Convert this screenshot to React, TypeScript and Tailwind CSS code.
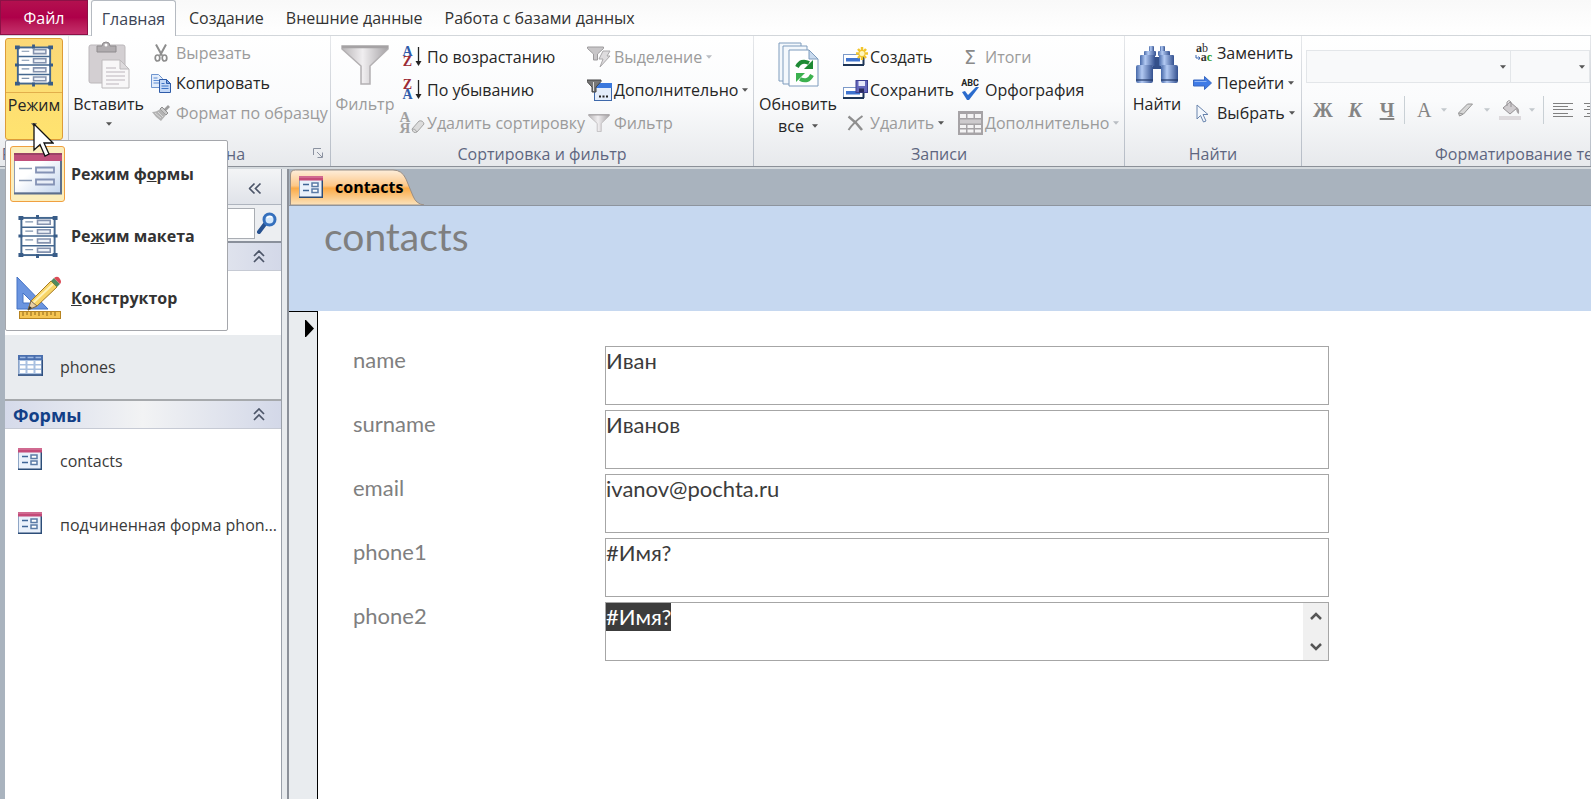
import { useEffect, useRef, type ReactNode } from "react"

function LayoutIcon({ className }: { className: string }) {
    return (
        <svg className={className} viewBox="0 0 40 44" fill="none">
            <rect x="3" y="3" width="34" height="38" fill="#fff" stroke="#44678f" strokeWidth="2" />
            <path d="M3 12.500h34M3 21.500h34M3 31.500h34" stroke="#44678f" strokeWidth="1.600" />
            <path d="M7 7h8M7 16.500h8M7 25.500h8M7 35.500h8" stroke="#7f93ad" strokeWidth="1.200" />
            <path d="M19.500 5.500h13v4h-13zM19.500 15h13v4h-13zM19.500 24.500h13v4h-13zM19.500 34h13v4h-13z" fill="#eef2f8" stroke="#8492ae" strokeWidth="1.600" />
            <path d="M0 1h5v4H0zM35 1h5v4h-5zM0 39h5v4H0zM35 39h5v4h-5zM18 0h3v4h-3zM18 40h3v4h-3zM0 20h4v3H0zM36 20h4v3h-4z" fill="#385c88" />
        </svg>
    )
}

function FormIcon({ className }: { className: string }) {
    return (
        <svg className={className} viewBox="0 0 24 22" fill="none">
            <rect x="0.500" y="0.500" width="23" height="21" fill="#eaf1fb" stroke="#8fa6c6" />
            <path d="M0 21.200h24M23.300 4v18" stroke="#2c4d78" strokeWidth="1.500" />
            <rect width="24" height="4.500" fill="#c44a78" />
            <path d="M0 1h24" stroke="#dc8aa9" />
            <path d="M4 8.500h6M4 14.500h6" stroke="#3f6596" strokeWidth="1.400" />
            <path d="M13 7h6v3.500h-6zM13 13h6v3.500h-6z" fill="#fff" stroke="#5b7ba6" strokeWidth="1.500" />
        </svg>
    )
}

function BigFormIcon() {
    return (
        <svg className="h-[42px] w-[48px]" viewBox="0 0 48 42" fill="none">
            <defs>
                <linearGradient id="formPage" x1="0" y1="0" x2="1" y2="1">
                    <stop offset="0.400" stopColor="#fff" />
                    <stop offset="1" stopColor="#c3d5ee" />
                </linearGradient>
            </defs>
            <rect x="0.500" y="1" width="46" height="39" fill="url(#formPage)" stroke="#8e9db5" />
            <path d="M0 40.500h48M47 8v33" stroke="#5c6f8d" strokeWidth="2" />
            <rect y="0" width="48" height="8" fill="#c04f7b" />
            <path d="M0 1h48" stroke="#8f3d5f" strokeWidth="1.500" />
            <path d="M5 15.500h13M5 27.500h13" stroke="#8a9ab5" strokeWidth="1.500" />
            <path d="M22 14.500h18v5H22zM22 26.500h18v5H22z" fill="#e9eef7" stroke="#8492b5" strokeWidth="1.800" />
        </svg>
    )
}

function DesignIcon() {
    return (
        <svg className="h-[44px] w-[46px]" viewBox="0 0 46 44" fill="none">
            <path d="M2 1v32h31z" fill="#6b95e0" stroke="#4472c4" />
            <path d="M8 17v10h10z" fill="#fff" stroke="#4472c4" />
            <rect x="4.500" y="35.500" width="41" height="7" fill="#f5c451" stroke="#b78421" />
            <path d="M8 36v4M12 36v3M16 36v4M20 36v3M24 36v4M28 36v3M32 36v4M36 36v3M40 36v4" stroke="#8d6518" />
            <path d="M13 34l3-9L36 5l6 6-20 19z" fill="#f8d568" stroke="#a57a24" />
            <path d="M18 27L38 8" stroke="#fff2b8" strokeWidth="2" />
            <path d="M36 5l3-3 6 6-3 3z" fill="#4f8a5f" />
            <path d="M39 2q4-3 6 1 2 3 0 5z" fill="#db4a55" />
            <path d="M13 34l3-9 6 5z" fill="#e9cfa3" stroke="#7b6b52" />
            <path d="M13 34l1.500-4 2.500 2z" fill="#333" />
        </svg>
    )
}

function TableIcon() {
    return (
        <svg className="h-[21px] w-[25px]" viewBox="0 0 25 21" fill="none">
            <rect x="0.500" y="0.500" width="24" height="20" fill="#a9c0e0" stroke="#8aa3c7" />
            <rect width="25" height="5" fill="#4a6fae" />
            <path d="M2 6h5.500v3H2zM9.500 6h6v3h-6zM17.500 6h5.500v3h-5.500zM2 10.500h5.500v3H2zM9.500 10.500h6v3h-6zM17.500 10.500h5.500v3h-5.500zM2 15h5.500v3H2zM9.500 15h6v3h-6zM17.500 15h5.500v3h-5.500z" fill="#fff" />
            <path d="M2 2.500h5.500M9.500 2.500h6M17.500 2.500h5.500" stroke="#9db8e2" strokeWidth="1.500" />
            <path d="M0 20h25M24.300 5v16" stroke="#2f4f7f" strokeWidth="1.500" />
        </svg>
    )
}

function PasteIcon() {
    return (
        <svg className="h-[48px] w-[42px]" viewBox="0 0 42 48" fill="none">
            <rect x="1" y="4" width="36" height="38" rx="2" fill="#d3cfd2" stroke="#bcb8bb" />
            <path d="M9 5h5q0-4 4-4t4 4h6v6H9z" fill="#b0acaf" stroke="#8f8c8e" />
            <circle cx="18" cy="4" r="1.500" fill="#fff" />
            <path d="M14 19h18l9 9v19H14z" fill="#f8f7f8" stroke="#bdbabc" />
            <path d="M32 19v9h9z" fill="#dedbdd" stroke="#bdbabc" />
            <path d="M18 27h10M18 31h19M18 35h19M18 39h19M18 43h13" stroke="#cfcccf" strokeWidth="1.500" />
        </svg>
    )
}

function CutIcon() {
    return (
        <svg className="h-[18px] w-[14px]" viewBox="0 0 14 18" fill="none" stroke="#8d8d8d">
            <path d="M2 0.500l6 11M12 0.500l-6 11" strokeWidth="2" />
            <ellipse cx="3.500" cy="14" rx="2.300" ry="3" strokeWidth="1.700" />
            <ellipse cx="10.500" cy="14" rx="2.300" ry="3" strokeWidth="1.700" />
        </svg>
    )
}

function CopyIcon() {
    return (
        <svg className="h-[19px] w-[20px]" viewBox="0 0 20 19" fill="none">
            <path d="M0.500 0.500h7l4 4v9h-11z" fill="#e3edfb" stroke="#6f95cf" />
            <path d="M2.500 4h4M2.500 6.500h6M2.500 9h6" stroke="#5f8dd3" />
            <path d="M8.500 5.500h7l4 4v9h-11z" fill="#c3d8f7" stroke="#2f5ca8" />
            <path d="M15.500 5.500v4h4z" fill="#7ea5e0" stroke="#2f5ca8" />
            <path d="M10.500 9.500h3M10.500 12h7M10.500 14.500h7" stroke="#3f74c6" />
        </svg>
    )
}

function BrushIcon() {
    return (
        <svg className="h-[16px] w-[18px]" viewBox="0 0 18 16" fill="none">
            <path d="M12 4l4-4 2 2-4 4z" fill="#9c9c9c" />
            <path d="M10 2l6 6-2 2-6-6z" fill="#c9c9c9" stroke="#8f8f8f" />
            <path d="M8 4l6 6-5 6q-5-3-9-9 5 0 8-3z" fill="#b3b3b3" />
            <path d="M3 8l6 5M6 7l5 5" stroke="#d8d8d8" />
        </svg>
    )
}

function FunnelIcon({ className }: { className: string }) {
    return (
        <svg className={className} viewBox="0 0 48 40" fill="none">
            <defs>
                <linearGradient id="funnel">
                    <stop offset="0" stopColor="#b9b6b8" />
                    <stop offset="0.450" stopColor="#f0eef0" />
                    <stop offset="1" stopColor="#a6a3a6" />
                </linearGradient>
            </defs>
            <path d="M1 1h46v3L29 21v18h-9V21L1 4z" fill="url(#funnel)" stroke="#b3b0b2" strokeWidth="1.500" />
            <path d="M1 2h46" stroke="#a5a2a4" strokeWidth="2.500" />
        </svg>
    )
}

function SortIcon({ top, bottom, topClass, bottomClass }: { top: string; bottom: string; topClass: string; bottomClass: string }) {
    return (
        <span className="flex items-center gap-0.5">
            <span className="flex w-[10px] flex-col items-center font-['Liberation_Serif',serif] text-[14px] font-bold leading-[10px]">
                <span className={topClass}>{top}</span>
                <span className={bottomClass}>{bottom}</span>
            </span>
            <svg className="h-[20px] w-[7px]" viewBox="0 0 7 20">
                <path d="M3.500 0v15" stroke="#222" strokeWidth="1.300" />
                <path d="M0.500 14h6l-3 5z" fill="#222" />
            </svg>
        </span>
    )
}

function ClearSortIcon() {
    return (
        <span className="flex items-end">
            <span className="flex w-[12px] flex-col items-center font-['Liberation_Serif',serif] text-[15px] font-bold leading-[11px] text-[#a0a0a0]">
                <span>А</span>
                <span>Я</span>
            </span>
            <svg className="h-[14px] w-[14px]" viewBox="0 0 14 14">
                <path d="M1 9l7-8q4-1 5 3l-7 8q-4 2-5-3z" fill="#dcdcdc" stroke="#a5a5a5" />
                <path d="M1 9q3-1 5 3" stroke="#a5a5a5" fill="none" />
            </svg>
        </span>
    )
}

function SelectionFilterIcon() {
    return (
        <svg className="h-[22px] w-[24px]" viewBox="0 0 24 22" fill="none">
            <path d="M0.500 1h16v1.500L10.500 8v6h-4V8L0.500 2.500z" fill="#c8c6c8" stroke="#9d9b9d" />
            <path d="M16 5h7l-3 5h3l-10 11 3-8h-4z" fill="#dedcde" stroke="#aaa8aa" />
        </svg>
    )
}

function AdvancedFilterIcon() {
    return (
        <svg className="h-[22px] w-[25px]" viewBox="0 0 25 22" fill="none">
            <rect x="7.500" y="4.500" width="17" height="17" fill="#e4edfb" stroke="#3d68ab" />
            <rect x="8" y="4" width="17" height="5" fill="#3a78dd" />
            <path d="M12 17.500h2M15.500 17.500h2M19 17.500h2" stroke="#222" strokeWidth="2" />
            <path d="M0 1h14v1.500L9 8v5H5V8L0 2.500z" fill="#777" stroke="#444" />
            <path d="M6.500 3v9" stroke="#ddd" />
        </svg>
    )
}

function RefreshIcon() {
    return (
        <svg className="h-[46px] w-[41px]" viewBox="0 0 41 46" fill="none">
            <path d="M1 1h22v38H1z" fill="#f4f8fc" stroke="#7f9cbd" />
            <path d="M5 4h24v38H5z" fill="#f4f8fc" stroke="#7f9cbd" />
            <path d="M11 8h20l9 9v27H11z" fill="#fff" stroke="#7f9cbd" />
            <path d="M31 8v9h9z" fill="#c9daee" stroke="#7f9cbd" />
            <path d="M19 25q4-8 12-4" stroke="#1e8a34" strokeWidth="4" />
            <path d="M35 18v9h-9z" fill="#1e8a34" />
            <path d="M34 33q-4 8-12 4" stroke="#3cb14f" strokeWidth="4" />
            <path d="M18 40v-9h9z" fill="#3cb14f" />
        </svg>
    )
}

function NewRecordIcon() {
    return (
        <svg className="h-[19px] w-[25px]" viewBox="0 0 25 19" fill="none">
            <rect x="0.500" y="7.500" width="20" height="10" fill="#fff" stroke="#7c9ac9" />
            <path d="M0 18h21M20.500 8v10" stroke="#1d3557" strokeWidth="2" />
            <rect x="3" y="11" width="14" height="3.500" fill="#3f74d0" />
            <path d="M19 0v13M13 6.500h12M15 2l8 9M23 2l-8 9" stroke="#f2c52c" strokeWidth="2.500" />
            <circle cx="19" cy="6.500" r="2.500" fill="#fff6bd" />
        </svg>
    )
}

function SaveRecordIcon() {
    return (
        <svg className="h-[19px] w-[25px]" viewBox="0 0 25 19" fill="none">
            <rect x="0.500" y="7.500" width="20" height="10" fill="#fff" stroke="#7c9ac9" />
            <path d="M0 18h21M20.500 8v10" stroke="#1d3557" strokeWidth="2" />
            <rect x="3" y="11" width="14" height="3.500" fill="#3f74d0" />
            <rect x="13" y="0.500" width="11.500" height="12" fill="#6467bb" stroke="#3c3f91" />
            <rect x="15.500" y="1" width="6.500" height="5" fill="#e6e8fa" />
            <rect x="16" y="8.500" width="5" height="4" fill="#2a2c60" />
        </svg>
    )
}

function DeleteIcon() {
    return (
        <svg className="h-[16px] w-[17px]" viewBox="0 0 17 16" fill="none">
            <path d="M1.500 1.500Q9 7 15 15" stroke="#8f8f8f" strokeWidth="2.500" />
            <path d="M15.500 1Q7 7 1.500 15" stroke="#8f8f8f" strokeWidth="2" />
        </svg>
    )
}

function SpellingIcon() {
    return (
        <span className="flex flex-col items-center">
            <span className="font-[Roboto,sans-serif] text-[9px] font-bold leading-[8px] text-[#222]">ABC</span>
            <svg className="h-[13px] w-[18px]" viewBox="0 0 18 13">
                <path d="M1 5l3-1 3 4L15 0h3L8 13H6z" fill="#2b6ccd" />
            </svg>
        </span>
    )
}

function MoreRecordsIcon() {
    return (
        <svg className="h-[24px] w-[25px]" viewBox="0 0 25 24">
            <rect width="25" height="24" fill="#a6a3a6" />
            <path d="M2 3h6v4H2zM9.500 3h6v4h-6zM17 3h6v4h-6zM2 14h6v3H2zM9.500 14h6v3h-6zM17 14h6v3h-6zM2 18.500h6v3H2zM9.500 18.500h6v3h-6zM17 18.500h6v3h-6z" fill="#f4f3f4" />
            <path d="M2 8.500h21v4H2z" fill="#cdcacd" />
        </svg>
    )
}

function BinocularsIcon() {
    return (
        <svg className="h-[40px] w-[44px]" viewBox="0 0 44 40" fill="none">
            <defs>
                <linearGradient id="tube">
                    <stop offset="0" stopColor="#4668a8" />
                    <stop offset="0.350" stopColor="#b3caf3" />
                    <stop offset="1" stopColor="#345190" />
                </linearGradient>
            </defs>
            <rect x="14" y="1" width="5" height="6" rx="1" fill="url(#tube)" />
            <rect x="25" y="1" width="5" height="6" rx="1" fill="url(#tube)" />
            <rect x="9" y="6" width="12" height="5" rx="1" fill="url(#tube)" />
            <rect x="23" y="6" width="12" height="5" rx="1" fill="url(#tube)" />
            <rect x="18" y="12" width="8" height="12" fill="#34508a" />
            <rect x="5" y="10" width="15" height="11" rx="1" fill="url(#tube)" />
            <rect x="24" y="10" width="15" height="11" rx="1" fill="url(#tube)" />
            <rect x="1" y="20" width="17" height="18" rx="2" fill="url(#tube)" />
            <rect x="26" y="20" width="17" height="18" rx="2" fill="url(#tube)" />
            <path d="M1 35h17M26 35h17" stroke="#1f3768" strokeWidth="2" opacity="0.600" />
        </svg>
    )
}

function ReplaceIcon() {
    return (
        <span className="flex w-[20px] flex-col font-['Liberation_Serif',serif] text-[12px] font-bold leading-[9px] text-[#333]">
            <span>a<span className="font-normal">b</span></span>
            <span className="flex items-center justify-end">
                <svg className="h-[6px] w-[6px]" viewBox="0 0 6 6" fill="none">
                    <path d="M1 0v3h4M3.500 1.500L5 3 3.500 5" stroke="#3a66b0" />
                </svg>
                a<span className="text-[#1f9b2c]">c</span>
            </span>
        </span>
    )
}

function GoToIcon() {
    return (
        <svg className="h-[14px] w-[19px]" viewBox="0 0 19 14">
            <path d="M0.500 4h11V0.500L18.500 7l-7 6.500V10h-11z" fill="#3f7be6" stroke="#3a69c0" />
            <path d="M1.500 5.500h12" stroke="#8db4f6" />
        </svg>
    )
}

function PointerIcon() {
    return (
        <svg className="h-[19px] w-[13px]" viewBox="0 0 13 19">
            <path d="M1 1v14l3.500-3.500 3 6.500 2.500-1-3-6.500H12z" fill="#f4f8fd" stroke="#6884ad" />
        </svg>
    )
}

function MagnifierIcon() {
    return (
        <svg className="h-[22px] w-[20px]" viewBox="0 0 20 22" fill="none">
            <path d="M8 12l-6 8" stroke="#27518f" strokeWidth="4" strokeLinecap="round" />
            <circle cx="12.500" cy="7.500" r="5.500" fill="#d4e8fc" stroke="#3570bd" strokeWidth="3" />
            <path d="M10 6q2-2.500 5-1" stroke="#fff" strokeWidth="1.500" />
        </svg>
    )
}

function EraserIcon() {
    return (
        <svg className="h-[14px] w-[17px] shrink-0" viewBox="0 0 17 14" fill="none">
            <path d="M1.500 10l9-9h5l-9 10-4 2z" fill="#d6d6d6" stroke="#969696" />
            <path d="M2 10l4 1" stroke="#969696" />
        </svg>
    )
}

function BucketIcon() {
    return (
        <svg className="h-[20px] w-[22px] shrink-0" viewBox="0 0 22 20" fill="none">
            <path d="M4 8l7-6 7 6-7 6z" fill="#cfcccf" stroke="#959295" />
            <path d="M8 6V2q2-3 4 0v5" stroke="#959295" />
            <path d="M17 7q4 1 3 7-3-1-3-7z" fill="#a5a2a5" />
            <rect y="16" width="22" height="4" fill="#dddadd" />
        </svg>
    )
}

function DoubleChevron({ className }: { className: string }) {
    return (
        <svg className={className} viewBox="0 0 12 13" fill="none" stroke="#4c5568" strokeWidth="1.700">
            <path d="M1 6l5-5 5 5M1 12l5-5 5 5" />
        </svg>
    )
}

function Arrow({ className = "text-[#555]" }: { className?: string }) {
    return (
        <svg className={`h-[4px] w-[6px] shrink-0 ${className}`} viewBox="0 0 7 4">
            <path d="M0 0h7L3.500 4z" fill="currentColor" />
        </svg>
    )
}

type ToolProps = {
    icon: ReactNode
    label: string
    disabled?: boolean
    arrow?: boolean
    arrowClass?: string
    tall?: boolean
}

function Tool({ icon, label, disabled, arrow, arrowClass, tall }: ToolProps) {
    return (
        <button disabled={disabled} className={`flex items-center gap-0.5 whitespace-nowrap text-[#262626] disabled:text-[#9b9b9b] ${tall ? "h-[33px]" : "h-[30px]"}`}>
            <span className="flex w-[26px] shrink-0 items-center justify-center">{icon}</span>
            {label}
            {arrow && <span className="ml-0.5"><Arrow className={arrowClass} /></span>}
        </button>
    )
}

function BigTool({ icon, children, disabled, className }: { icon: ReactNode; children: ReactNode; disabled?: boolean; className: string }) {
    return (
        <button disabled={disabled} className={`flex shrink-0 flex-col items-center text-[#262626] disabled:text-[#9b9b9b] ${className}`}>
            <span className="flex h-[56px] items-center pt-0.5">{icon}</span>
            {children}
        </button>
    )
}

function Group({ label, children, className, labelClass = "" }: { label: string; children: ReactNode; className: string; labelClass?: string }) {
    return (
        <section className={`flex ${className}`}>
            <div className="flex min-w-0 flex-1 flex-col">
                <div className="flex h-[105px]">{children}</div>
                <div className={`flex h-[25px] items-center justify-center whitespace-nowrap text-[#5e6680] ${labelClass}`}>{label}</div>
            </div>
            <div className="w-px bg-linear-to-b from-[#e6e8eb] to-[#b4bbc5]"></div>
        </section>
    )
}

function ViewMenu() {
    return (
        <div className="absolute left-[5px] top-[140px] z-10 w-[223px] rounded-[2px] border border-[#a5a7ac] bg-white pb-px pt-[2px] text-base font-bold text-[#333]">
            <button className="flex h-[62px] w-full items-center gap-1.5 px-1">
                <span className="flex h-[56px] w-[55px] items-center justify-center rounded-[3px] border border-[#f0a040] bg-[#fbeebd]"><BigFormIcon /></span>
                <span>Режим ф<u>о</u>рмы</span>
            </button>
            <button className="flex h-[62px] w-full items-center gap-1.5 px-1">
                <span className="flex w-[55px] justify-center"><LayoutIcon className="h-[43px] w-[40px]" /></span>
                <span>Ре<u>ж</u>им макета</span>
            </button>
            <button className="flex h-[62px] w-full items-center gap-1.5 px-1">
                <span className="flex w-[55px] justify-center"><DesignIcon /></span>
                <span><u>К</u>онструктор</span>
            </button>
        </div>
    )
}

function Ribbon() {
    return (
        <div className="flex h-[131px] shrink-0 overflow-hidden border-b border-[#8b9098] bg-linear-to-b from-white via-[#fafbfc] to-[#e7e9ec]">
            <Group label="Режимы" className="w-[69px] shrink-0">
                <button className="ml-[5px] mt-0.5 flex h-[102px] w-[58px] flex-col items-center rounded-[3px] border border-[#dd9c38] bg-linear-to-b from-[#fbd877] to-[#ffe36f] text-[#262626]">
                    <span className="flex h-[54px] w-full items-center justify-center border-b border-[#e2ae4b]"><LayoutIcon className="h-[43px] w-[38px]" /></span>
                    <span className="leading-[24px]">Режим</span>
                    <span className="pt-1.5"><Arrow /></span>
                </button>
            </Group>

            <Group label="Буфер обмена" className="relative w-[262px] shrink-0" labelClass="pr-5">
                <BigTool icon={<PasteIcon />} className="w-[79px]">
                    <span className="leading-[24px]">Вставить</span>
                    <span className="pt-1.5"><Arrow /></span>
                </BigTool>
                <div className="flex flex-col pt-0.5">
                    <Tool icon={<CutIcon />} label="Вырезать" disabled />
                    <Tool icon={<CopyIcon />} label="Копировать" />
                    <Tool icon={<BrushIcon />} label="Формат по образцу" disabled />
                </div>
                <button aria-label="Буфер обмена" className="absolute bottom-2 right-2">
                    <svg className="h-[10px] w-[10px]" viewBox="0 0 10 10" fill="none" stroke="#8b92a0">
                        <path d="M0.500 7V0.500H8M4 4l5 5M9.500 4.500v5h-5" />
                    </svg>
                </button>
            </Group>

            <Group label="Сортировка и фильтр" className="w-[423px] shrink-0">
                <BigTool icon={<FunnelIcon className="h-[40px] w-[48px]" />} className="w-[68px]" disabled>
                    <span className="leading-[24px]">Фильтр</span>
                </BigTool>
                <div className="flex w-[187px] flex-col pt-1">
                    <Tool tall icon={<SortIcon top="A" bottom="Z" topClass="text-[#2f5cab]" bottomClass="text-[#9c2b35]" />} label="По возрастанию" />
                    <Tool tall icon={<SortIcon top="Z" bottom="A" topClass="text-[#9c2b35]" bottomClass="text-[#2f5cab]" />} label="По убыванию" />
                    <Tool tall icon={<ClearSortIcon />} label="Удалить сортировку" disabled />
                </div>
                <div className="flex flex-col pt-1">
                    <Tool tall icon={<SelectionFilterIcon />} label="Выделение" disabled arrow arrowClass="text-[#b9bdc3]" />
                    <Tool tall icon={<AdvancedFilterIcon />} label="Дополнительно" arrow />
                    <Tool tall icon={<FunnelIcon className="h-[18px] w-[22px]" />} label="Фильтр" disabled />
                </div>
            </Group>

            <Group label="Записи" className="w-[371px] shrink-0">
                <BigTool icon={<RefreshIcon />} className="w-[88px]">
                    <span className="leading-[24px]">Обновить</span>
                    <span className="flex items-center gap-2 leading-[20px]">все <Arrow /></span>
                </BigTool>
                <div className="flex w-[115px] flex-col pt-1">
                    <Tool tall icon={<NewRecordIcon />} label="Создать" />
                    <Tool tall icon={<SaveRecordIcon />} label="Сохранить" />
                    <Tool tall icon={<DeleteIcon />} label="Удалить" disabled arrow />
                </div>
                <div className="flex flex-col pt-1">
                    <Tool tall icon={<span className="font-['DejaVu_Sans',sans-serif] text-[19px] leading-[20px] text-[#8a8a8a]">Σ</span>} label="Итоги" disabled />
                    <Tool tall icon={<SpellingIcon />} label="Орфография" />
                    <Tool tall icon={<MoreRecordsIcon />} label="Дополнительно" disabled arrow arrowClass="text-[#b9bdc3]" />
                </div>
            </Group>

            <Group label="Найти" className="w-[177px] shrink-0">
                <BigTool icon={<BinocularsIcon />} className="w-[64px]">
                    <span className="leading-[24px]">Найти</span>
                </BigTool>
                <div className="flex flex-col pt-0.5">
                    <Tool icon={<ReplaceIcon />} label="Заменить" />
                    <Tool icon={<GoToIcon />} label="Перейти" arrow />
                    <Tool icon={<PointerIcon />} label="Выбрать" arrow />
                </div>
            </Group>

            <Group label="Форматирование текста" className="min-w-0 flex-1" labelClass="justify-start pl-[133px]">
                <div className="flex w-full flex-col overflow-hidden pl-1">
                    <div className="mt-[14px] flex h-[33px]">
                        <button aria-label="Шрифт" className="flex w-[205px] shrink-0 items-center justify-end border border-[#e3e6e9] bg-[#f8f9fa] pr-1"><Arrow /></button>
                        <button aria-label="Размер шрифта" className="-ml-px flex min-w-0 flex-1 items-center justify-end border border-[#e3e6e9] bg-[#f8f9fa] pr-1"><Arrow /></button>
                    </div>
                    <div className="mt-[12px] flex h-[30px] items-center font-['Liberation_Serif',serif] text-[20px] text-[#858585]">
                        <button disabled className="w-[34px] shrink-0 font-bold">Ж</button>
                        <button disabled className="w-[30px] shrink-0 font-bold italic">К</button>
                        <button disabled className="w-[34px] shrink-0 font-bold underline">Ч</button>
                        <span className="h-[28px] w-px shrink-0 bg-[#c9d0d5]"></span>
                        <button disabled aria-label="Цвет текста" className="flex w-[52px] shrink-0 items-center gap-2.5 pl-[12px]">A <Arrow className="text-[#c3c8cc]" /></button>
                        <button disabled aria-label="Выделение цветом" className="flex w-[42px] shrink-0 items-center gap-2.5"><EraserIcon /><Arrow className="text-[#c3c8cc]" /></button>
                        <button disabled aria-label="Заливка" className="flex w-[44px] shrink-0 items-center gap-2"><BucketIcon /><Arrow className="text-[#c3c8cc]" /></button>
                        <span className="h-[28px] w-px shrink-0 bg-[#c9d0d5]"></span>
                        <svg className="ml-[9px] h-[15px] w-[20px] shrink-0" viewBox="0 0 20 15" stroke="#808080">
                            <path d="M0 0.500h20M0 3.500h15M0 6.500h20M0 10.500h15M0 13.500h20" />
                        </svg>
                        <svg className="ml-[11px] h-[15px] w-[20px] shrink-0" viewBox="0 0 20 15" stroke="#808080">
                            <path d="M0 0.500h20M3 3.500h14M0 6.500h20M3 10.500h14M0 13.500h20" />
                        </svg>
                    </div>
                </div>
            </Group>
        </div>
    )
}

function NavHeader({ title }: { title: string }) {
    return (
        <div className="flex h-[28px] items-center justify-between border-b border-[#c6cad4] bg-linear-to-r from-[#d5daea] via-[#f2f3f4] to-[#d3d8e8] pl-2 pr-4 text-lg font-bold text-[#123f87]">
            {title}
            <DoubleChevron className="h-[13px] w-[12px]" />
        </div>
    )
}

function NavItem({ icon, label, active }: { icon: ReactNode; label: string; active?: boolean }) {
    return (
        <a href="#" className={`flex h-[64px] items-center gap-[17px] pl-[13px] ${active ? "bg-[#e9ecef]" : ""}`}>
            <span className="flex w-[25px] shrink-0 pb-1">{icon}</span>
            <span className="truncate">{label}</span>
        </a>
    )
}

function NavPane() {
    return (
        <nav className="flex w-[277px] shrink-0 flex-col border-r border-[#9aa0aa] bg-white text-base text-[#3a3a3a]">
            <div className="flex h-[36px] items-center justify-end border-b border-[#aeb4be] bg-linear-to-b from-[#f3f4f6] to-[#e0e3e9] pr-5 pt-1">
                <button aria-label="Свернуть"><DoubleChevron className="h-[13px] w-[12px] -rotate-90" /></button>
            </div>
            <div className="flex h-[38px] items-center gap-0.5 border-b-2 border-[#8a909b] bg-[#eceef1]">
                <input aria-label="Поиск" className="h-[31px] w-[250px] border border-[#a9adb3] bg-white px-2" />
                <MagnifierIcon />
            </div>
            <NavHeader title="Таблицы" />
            <NavItem icon={<TableIcon />} label="contacts" />
            <NavItem icon={<TableIcon />} label="phones" active />
            <div className="h-[2px] bg-[#a6a9ac]"></div>
            <NavHeader title="Формы" />
            <NavItem icon={<FormIcon className="h-[22px] w-[24px]" />} label="contacts" />
            <NavItem icon={<FormIcon className="h-[22px] w-[24px]" />} label="подчиненная форма phones" />
        </nav>
    )
}

const fields = [
    { id: "name", value: "Иван" },
    { id: "surname", value: "Иванов" },
    { id: "email", value: "ivanov@pochta.ru" },
    { id: "phone1", value: "#Имя?" },
]

function ContactForm() {
    const current = useRef<HTMLTextAreaElement>(null);

    useEffect(() => {
        current.current?.focus()
        current.current?.select()
    }, [])

    return (
        <form className="flex min-w-0 flex-1 flex-col gap-[5px] bg-white pl-[35px] pr-4 pt-[35px] font-[Lato,sans-serif] text-[22px] leading-[28px]">
            {fields.map((field) => (
                <div key={field.id} className="flex">
                    <label htmlFor={field.id} className="w-[252px] shrink-0 text-[#7f7f7f]">{field.id}</label>
                    <textarea id={field.id} defaultValue={field.value} className="h-[59px] w-full max-w-[724px] resize-none overflow-hidden border border-[#a6a6a6] text-[#3c3c3c] outline-none" />
                </div>
            ))}
            <div className="flex">
                <label htmlFor="phone2" className="w-[252px] shrink-0 text-[#7f7f7f]">phone2</label>
                <div className="flex h-[59px] w-full max-w-[724px] border border-[#a6a6a6]">
                    <textarea ref={current} id="phone2" defaultValue="#Имя?" className="min-w-0 flex-1 resize-none overflow-hidden text-[#3c3c3c] outline-none selection:bg-[#3c3c3c] selection:text-white" />
                    <div className="flex w-[25px] flex-col items-center justify-between bg-[#f0f0f0] py-[9px]">
                        <button type="button" aria-label="Вверх">
                            <svg className="h-[10px] w-[12px]" viewBox="0 0 12 10" fill="none" stroke="#555" strokeWidth="2.500"><path d="M1 7l5-5 5 5" /></svg>
                        </button>
                        <button type="button" aria-label="Вниз">
                            <svg className="h-[10px] w-[12px]" viewBox="0 0 12 10" fill="none" stroke="#555" strokeWidth="2.500"><path d="M1 3l5 5 5-5" /></svg>
                        </button>
                    </div>
                </div>
            </div>
        </form>
    )
}

function Document() {
    return (
        <main className="flex min-w-0 flex-1 flex-col border-l-2 border-[#8b9099]">
            <div className="flex h-[37px] shrink-0 items-end border-b border-[#8d949e] bg-[#a9b3be]">
                <button className="relative flex h-[36px] w-[136px] items-center gap-3 pl-[10px] text-base font-bold text-black">
                    <svg className="absolute inset-0 h-full w-full" viewBox="0 0 136 36" preserveAspectRatio="none">
                        <defs>
                            <linearGradient id="docTab" x1="0" y1="0" x2="0" y2="1">
                                <stop offset="0" stopColor="#fdeedb" />
                                <stop offset="0.450" stopColor="#fdc787" />
                                <stop offset="0.520" stopColor="#fbab48" />
                                <stop offset="1" stopColor="#fbe3bd" />
                            </linearGradient>
                        </defs>
                        <path d="M1.500 36V6q0-5 5-5H104q9 0 13 9l7 17q3 8 11 9z" fill="url(#docTab)" stroke="#9a8f86" />
                    </svg>
                    <FormIcon className="relative h-[22px] w-[24px]" />
                    <span className="relative">contacts</span>
                </button>
            </div>
            <header className="h-[105px] shrink-0 bg-[#c6d8f0] pl-[35px] pt-[6px]">
                <h1 className="font-[Lato,sans-serif] text-[39px] leading-[48px] text-[#7f7f7f]">contacts</h1>
            </header>
            <div className="flex flex-1">
                <div className="flex w-[29px] shrink-0 justify-end border-r border-t border-black bg-[#e9ecef] pr-[3px] pt-[8px]">
                    <svg className="h-[17px] w-[9px]" viewBox="0 0 9 17"><path d="M0 0h1l8 8.500L1 17H0z" /></svg>
                </div>
                <ContactForm />
            </div>
        </main>
    )
}

function App() {
    return (
        <div className="relative flex min-h-screen flex-col overflow-hidden bg-[#a9b3be] font-['Open_Sans','Noto_Sans',sans-serif] text-base">
            <div className="flex h-[36px] shrink-0 items-stretch whitespace-nowrap border-b border-[#d3d7db] bg-linear-to-b from-[#f9f9f9] to-white text-[#333]">
                <button className="w-[88px] border border-[#8c1146] bg-linear-to-b from-[#b3104f] via-[#ae0049] to-[#c62e6c] text-white">Файл</button>
                <button className="-mb-px ml-[3px] w-[85px] rounded-t-[3px] border border-b-0 border-[#b5bac1] bg-white text-[#3c4557]">Главная</button>
                <button className="ml-[13px]">Создание</button>
                <button className="ml-[22px]">Внешние данные</button>
                <button className="ml-[22px]">Работа с базами данных</button>
            </div>
            <Ribbon />
            <div className="h-[2px] shrink-0 bg-[#d5dade]"></div>
            <div className="flex flex-1 pl-[5px]">
                <NavPane />
                <div className="w-[5px] shrink-0 bg-[#e8ebee]"></div>
                <Document />
            </div>
            <ViewMenu />
            <svg className="absolute left-[33px] top-[123px] z-20 h-[34px] w-[21px]" viewBox="0 0 21 34">
                <path d="M1 1v26l6-5.500 5 11.500 4-2-5-11h9z" fill="#fff" stroke="#111" strokeWidth="1.300" />
            </svg>
        </div>
    )
}

export default App
